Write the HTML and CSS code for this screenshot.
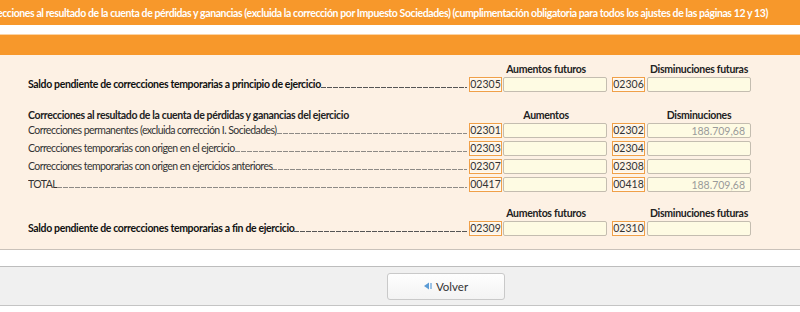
FILE: index.html
```html
<!DOCTYPE html>
<html lang="es">

<head>
  <meta charset="UTF-8">
  <title>Correcciones al resultado</title>
  <link rel="stylesheet" href="styles.css">
</head>

<body>
  <div class="titulo">
    <span>Correcciones al resultado de la cuenta de pérdidas y ganancias (excluida la corrección por Impuesto Sociedades) (cumplimentación obligatoria para todos los ajustes de las páginas 12 y 13)</span>
  </div>
  <div class="barra"></div>

  <div class="panel">
    <!-- Saldo inicial -->
    <div class="grupo">
      <div class="hueco"></div>
      <div class="cab cab-1">Aumentos futuros</div>
      <div class="cab cab-2">Disminuciones futuras</div>

      <div class="etiqueta negrita"><span>Saldo pendiente de correcciones temporarias a principio de ejercicio</span></div>
      <div class="codigo">02305</div>
      <input class="campo" type="text">
      <div class="codigo">02306</div>
      <input class="campo" type="text">
    </div>

    <!-- Correcciones del ejercicio -->
    <div class="grupo grupo-medio">
      <div class="titulo-grupo">Correcciones al resultado de la cuenta de pérdidas y ganancias del ejercicio</div>
      <div class="cab cab-1">Aumentos</div>
      <div class="cab cab-2">Disminuciones</div>

      <div class="etiqueta"><span>Correcciones permanentes (excluida corrección I. Sociedades)</span></div>
      <div class="codigo">02301</div>
      <input class="campo" type="text">
      <div class="codigo">02302</div>
      <input class="campo" type="text" value="188.709,68" readonly>

      <div class="etiqueta"><span>Correcciones temporarias con origen en el ejercicio</span></div>
      <div class="codigo">02303</div>
      <input class="campo" type="text">
      <div class="codigo">02304</div>
      <input class="campo" type="text">

      <div class="etiqueta"><span>Correcciones temporarias con origen en ejercicios anteriores</span></div>
      <div class="codigo">02307</div>
      <input class="campo" type="text">
      <div class="codigo">02308</div>
      <input class="campo" type="text">

      <div class="etiqueta"><span>TOTAL</span></div>
      <div class="codigo">00417</div>
      <input class="campo" type="text">
      <div class="codigo">00418</div>
      <input class="campo" type="text" value="188.709,68" readonly>
    </div>

    <!-- Saldo final -->
    <div class="grupo">
      <div class="hueco"></div>
      <div class="cab cab-1">Aumentos futuros</div>
      <div class="cab cab-2">Disminuciones futuras</div>

      <div class="etiqueta negrita"><span>Saldo pendiente de correcciones temporarias a fin de ejercicio</span></div>
      <div class="codigo">02309</div>
      <input class="campo" type="text">
      <div class="codigo">02310</div>
      <input class="campo" type="text">
    </div>
  </div>

  <div class="separador"></div>

  <div class="pie">
    <button class="btn-volver" type="button">
      <svg width="8" height="8" viewBox="0 0 8 8" aria-hidden="true">
        <polygon points="0,4 5,0.5 5,7.5" fill="#5b9bd5" />
        <rect x="6" y="1" width="2" height="6" fill="#9cc3e6" />
      </svg>
      Volver
    </button>
  </div>
</body>

</html>
```

FILE: styles.css
```css
body {
  margin: 0;
  font-family: Lato, "Open Sans", sans-serif;
  font-size: 10.5px;
  letter-spacing: -0.55px;
  color: #222;
  background: #fff;
  overflow: hidden;
}

.titulo {
  height: 25px;
  background: #f7982b;
  color: #fff;
  font-weight: bold;
  letter-spacing: -0.4px;
  display: flex;
  align-items: center;
  white-space: nowrap;
  overflow: hidden;
}

.titulo span {
  margin-left: -22px;
}

.barra {
  height: 20px;
  margin-top: 9px;
  background: #f7982b;
  border-top: 1px solid #fbd3a4;
}

.panel {
  background: #fdf1e4;
  border-bottom: 1px solid #c9c2ba;
  padding: 7px 49px 13px 28px;
}

.grupo {
  display: grid;
  grid-template-columns: 1fr 33px 105px 38px 106px;
  row-gap: 3px;
  align-items: center;
}

.grupo-medio {
  margin: 16px 0 14px;
}

.hueco,
.cab,
.titulo-grupo {
  line-height: 14px;
  margin-bottom: -2px;
}

.cab {
  font-weight: bold;
  text-align: center;
  white-space: nowrap;
  letter-spacing: -0.3px;
}

.cab-1 {
  grid-column: 2 / span 2;
  padding-left: 16px;
}

.cab-2 {
  grid-column: 5;
  padding-left: 2px;
}

.titulo-grupo {
  font-weight: bold;
  white-space: nowrap;
  letter-spacing: -0.35px;
}

.etiqueta {
  display: flex;
  align-items: baseline;
  white-space: nowrap;
  overflow: hidden;
  line-height: 15px;
  margin-right: 2px;
  color: #333;
}

.etiqueta::after {
  content: "";
  flex: 1;
  height: 1px;
  background: repeating-linear-gradient(to right, #8d8a86 0 5px, transparent 5px 6px);
}

.negrita {
  font-weight: bold;
  color: #111;
  letter-spacing: -0.35px;
}

.negrita::after {
  background: repeating-linear-gradient(to right, #555 0 5px, transparent 5px 6px);
}

.codigo {
  justify-self: end;
  width: 31px;
  height: 13px;
  line-height: 13px;
  border: 1px solid #f0a048;
  box-shadow: inset 0 0 0 1px #fffaf2;
  background: #fdf4e6;
  text-align: center;
  color: #333;
  letter-spacing: 0;
}

.campo {
  box-sizing: border-box;
  justify-self: end;
  width: 104px;
  height: 15px;
  margin: 0;
  padding: 0 5px;
  border: 1px solid #c4bdb0;
  border-radius: 2px;
  background: #fefbe3;
  font-family: inherit;
  font-size: 10.5px;
  letter-spacing: 0;
  color: #9a9a9a;
  text-align: right;
  outline: none;
}

.separador {
  height: 16px;
  border-bottom: 1px solid #bdbdbd;
}

.pie {
  height: 38px;
  background: #f0f0f0;
  border-bottom: 1px solid #c4c4c4;
  display: flex;
  align-items: center;
  justify-content: center;
  padding-left: 92px;
}

.btn-volver {
  width: 118px;
  height: 27px;
  border: 1px solid #c9c9c9;
  border-radius: 3px;
  background: linear-gradient(#fefefe, #f3f3f3);
  font-family: inherit;
  font-size: 11.5px;
  letter-spacing: 0;
  color: #333;
  display: flex;
  align-items: center;
  justify-content: center;
  gap: 4px;
  cursor: pointer;
}
```
